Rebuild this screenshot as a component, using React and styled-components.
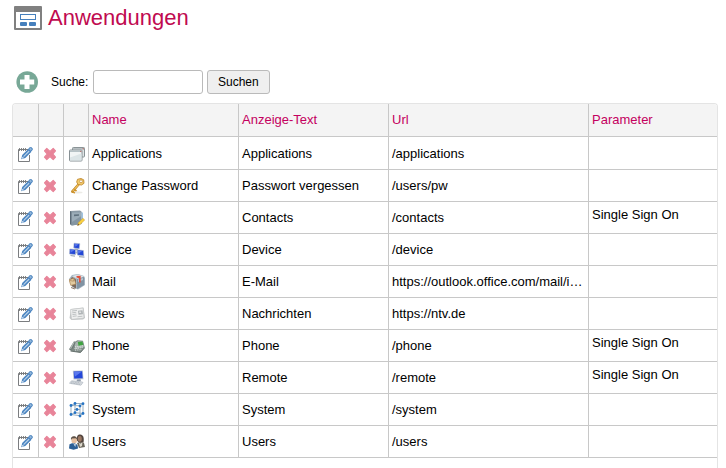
import React, { useState } from "react";
import styled, { createGlobalStyle } from "styled-components";

const GlobalStyle = createGlobalStyle`
  * {
    box-sizing: border-box;
  }

  body {
    margin: 0;
    background: #fff;
    color: #000;
    font-family: "Liberation Sans", Arial, sans-serif;
    font-size: 13px;
  }
`;

const Page = styled.main`
  display: flex;
  flex-direction: column;
  min-height: 100vh;
  padding: 4px 8px 0 12px;
`;

const TitleBar = styled.header`
  display: flex;
  align-items: center;
  gap: 6px;
  height: 28px;
  padding-left: 2px;

  h1 {
    margin: 0;
    color: #c00a50;
    font-size: 22px;
    font-weight: 400;
    line-height: 28px;
  }
`;

const SearchBar = styled.form`
  display: flex;
  align-items: center;
  gap: 4px;
  margin: 38px 0 9px;
  padding-left: 4px;
  font-size: 12px;

  label {
    width: 46px;
    padding-left: 8px;
  }
`;

const SearchInput = styled.input`
  width: 110px;
  height: 24px;
  padding: 0 4px;
  border: 1px solid #bababa;
  border-radius: 3px;
  background: #fff;
  font: inherit;
`;

const SearchButton = styled.button`
  height: 24px;
  padding: 0 10px;
  border: 1px solid #bababa;
  border-radius: 3px;
  background: #efefef;
  color: #000;
  font: inherit;
`;

const IconButton = styled.button`
  display: block;
  margin: 0 auto;
  padding: 0;
  border: 0;
  background: none;
  cursor: pointer;

  svg {
    display: block;
  }
`;

const AddButton = styled(IconButton)`
  margin: 0;
`;

const Panel = styled.section`
  flex: 1;
  overflow: hidden;
  border: 1px solid #e4e4e4;
  border-bottom: 0;
  border-radius: 4px 4px 0 0;
`;

const Grid = styled.table`
  width: 100%;
  border-collapse: separate;
  border-spacing: 0;
  table-layout: fixed;

  tbody tr:first-child td {
    height: 33px;
    padding-top: 1px;
  }
`;

const Col = styled.col`
  width: ${({ $width }) => ($width ? `${$width}px` : "auto")};
`;

const HeadCell = styled.th`
  height: 33px;
  padding: 0 3px 2px;
  border-right: 1px solid #c8c8c8;
  border-bottom: 1px solid #c8c8c8;
  background: #f4f4f4;
  color: #c4005f;
  font-weight: 400;
  text-align: left;

  &:last-child {
    border-right: 0;
  }
`;

const Cell = styled.td`
  height: 32px;
  padding: 0 3px;
  overflow: hidden;
  border-right: 1px solid #c8c8c8;
  border-bottom: 1px solid #c8c8c8;
  text-overflow: ellipsis;
  white-space: nowrap;

  &:last-child {
    padding-bottom: 6px;
    border-right: 0;
  }
`;

const IconCell = styled(Cell)`
  padding: 0 2px 0 0;

  svg {
    display: block;
    margin: 0 auto;
  }
`;

const AppIconCell = styled(IconCell)`
  padding: 0 0 0 2px;
`;

const Icon = ({ size = 16, children }) => (
  <svg width={size} height={size} viewBox="0 0 16 16" aria-hidden="true">
    {children}
  </svg>
);

const LayoutIcon = () => (
  <svg width="28" height="24" viewBox="0 0 28 24" aria-hidden="true">
    <rect width="28" height="24" rx="1" fill="#808080" />
    <rect x="2" y="6" width="24" height="16" fill="#fff" />
    <rect x="6.5" y="8.5" width="15" height="5" fill="#fff" stroke="#4680bd" />
    <rect x="6" y="16" width="7" height="4" rx="1" fill="#4680bd" />
    <rect x="15" y="16" width="7" height="4" rx="1" fill="#4680bd" />
  </svg>
);

const AddIcon = () => (
  <svg width="23" height="22" viewBox="0 0 23 22" aria-hidden="true">
    <circle cx="11.2" cy="11" r="10.8" fill="#78a897" />
    <path d="M8.5 4h5v4.5h4.7v5h-4.7V18h-5v-4.5H4v-5h4.500z" fill="#fff" />
  </svg>
);

const EditIcon = () => (
  <Icon>
    <path d="M11 3.5H1.5v12h11V9" fill="#fff" stroke="#7b7d80" />
    <path
      d="M2.5 2v3M4.500 2v3M6.500 2v3M8.500 2v3"
      stroke="#77797b"
      strokeWidth="0.9"
    />
    <path d="M4.200 13.200l1-4.200 6.300-6.300 3 3L8.300 12z" fill="#4a84c0" />
    <path d="M6.600 10.600l5.600-5.600" stroke="#b9d2ea" strokeWidth="1.100" />
    <circle cx="13.600" cy="3.200" r="1.700" fill="#8fb5da" stroke="#4680bd" />
    <path d="M5.400 10.800l1.600 1.300-2 .7z" fill="#e7eff7" />
  </Icon>
);

const DeleteIcon = () => (
  <Icon>
    <path
      d="M4.800 2.500L8 5.400l3.200-2.900 2.300 2.300L10.700 8l2.800 3.200-2.300 2.300L8 10.600l-3.200 2.900-2.300-2.300L5.300 8 2.500 4.800z"
      fill="#e88499"
      stroke="#e88499"
      strokeWidth="1.200"
      strokeLinejoin="round"
    />
  </Icon>
);

const WindowsIcon = () => (
  <Icon>
    <rect x="3.5" y="1.5" width="12" height="9.500" rx="0.8" fill="#e0e5e6" stroke="#8a9396" />
    <path d="M4 2h11v1.500H4z" fill="#b6bec1" />
    <rect x="0.500" y="4" width="12.500" height="11" rx="0.8" fill="#f1f5f5" stroke="#879094" />
    <path d="M1 4.500h11.500V6H1z" fill="#b6c2c6" />
    <path d="M1 14.500v-3l11.500-4v7z" fill="#dce5e7" />
    <path d="M11 5.300h1.500M13.500 2.800H15" stroke="#b56d66" />
  </Icon>
);

const KeyIcon = () => (
  <Icon>
    <ellipse cx="9" cy="14.500" rx="4.500" ry="0.9" fill="#ecebe7" />
    <path d="M9.500 6.500L3.300 13.600" stroke="#b98027" strokeWidth="2.600" strokeLinecap="round" />
    <path d="M9.500 6.500L3.300 13.600" stroke="#eebe58" strokeWidth="1.400" strokeLinecap="round" />
    <path d="M5.200 11.200l2.300 2M3.200 13.200l2.600 2" stroke="#cf952f" strokeWidth="1.600" />
    <path
      d="M8.500 1.300l3.500-.8 2.700 1.300.300 3.500-2.500 1.700-3.500-.5-1.300-2.500z"
      fill="#f3cb6b"
      stroke="#c18a32"
      strokeWidth="0.9"
    />
    <circle cx="12" cy="3.300" r="1.400" fill="#fff" stroke="#b77b25" strokeWidth="0.6" />
  </Icon>
);

const ContactsIcon = () => (
  <Icon>
    <path d="M1 1l10-.5 1.500 1.300V14L3 15.500 1 14z" fill="#8c9ba6" />
    <path d="M1 1l1.500.9v13.500L1 14z" fill="#5c6c78" />
    <path d="M2.500 2l10-.2V14l-10 1.500z" fill="#8496a3" />
    <path d="M3 2.500l9-.2v4L3 12z" fill="#9cadb8" />
    <path d="M5 4.500l5-.3v1.600l-5 .4z" fill="#5f717e" />
    <path d="M12.500 2.500H14v8h-1.500z" fill="#9fc3e0" />
    <path d="M8.500 15.500l1-2.900 4.400-4.300 1.800 1.700-4.600 4.500z" fill="#fad13f" stroke="#c9962f" strokeWidth="0.5" />
    <path d="M8.500 15.500l.6-1.700 1.200 1.100z" fill="#55483d" />
  </Icon>
);

const DeviceIcon = () => (
  <Icon>
    <path d="M8 7v4M5 10l6 2" stroke="#9ba5b4" />
    <path d="M5 1.200l5.800.5-.6 5L4.800 6z" fill="#2347d6" stroke="#a9b5cd" strokeWidth="0.6" />
    <path d="M5.700 2l4 .3-3.200 2.400z" fill="#5878ec" />
    <path d="M.8 7l5.700.5v5.100L.5 12z" fill="#2347d6" stroke="#a9b5cd" strokeWidth="0.6" />
    <path d="M1.400 7.700l4 .4-3.700 2.700z" fill="#5878ec" />
    <path d="M8.200 7.800l6.200.8.4 5.200-6.300-.7z" fill="#2347d6" stroke="#a9b5cd" strokeWidth="0.6" />
    <path d="M8.900 8.500l4.400.6-4 2.700z" fill="#5878ec" />
    <path d="M1.500 13.500l4.500.6M6 7.300l3 .4M10 14.700l5.500.5" stroke="#a2abb8" strokeWidth="1.200" />
  </Icon>
);

const MailIcon = () => (
  <Icon>
    <path d="M0 5l3-4 6-1 6 2 1 2v7l-7 4.500L3 13z" fill="#a5b4c0" />
    <path d="M3 2l6-1.500 6 2L9 5z" fill="#dce4e8" />
    <path d="M8 5l7-2v8l-7 4z" fill="#8193a3" />
    <path d="M9 5.500l5-1.500v2L9 8z" fill="#b6c4d1" />
    <path d="M1.500 5.500L3 3l4 2.500v9.200L3 12z" fill="#7a6a60" />
    <path d="M0 5.800l5-1.600L7 10l-5.200 1.400z" fill="#e2cba1" stroke="#a57a48" strokeWidth="0.6" />
    <path d="M.7 6.500l3.800.7.500-2.500" fill="none" stroke="#a88256" strokeWidth="0.7" />
    <path d="M10 8.500V4.200L7.500 3.500V2l4.200-.2V8.500z" fill="#e2503b" />
    <path d="M2 13.500l4 1.500" stroke="#8f7867" />
  </Icon>
);

const NewsIcon = () => (
  <Icon>
    <path d="M2 3l12.500-1.500L16 12l-2 1.500L2.500 14 .5 12z" fill="#c3c6c7" />
    <path d="M1.500 3.500L14 2l1 10-12.500 1.300z" fill="#eff0f0" stroke="#bfc2c2" strokeWidth="0.6" />
    <path d="M3 5l5-.6M3.200 6.800l4-.5M3.400 8.600l4-.5M3.700 10.400l4-.5M8.500 10.800l5-.6" stroke="#b9bdbe" strokeWidth="0.9" />
    <path d="M9 4.800l4.500-.5.5 4-4.500.5z" fill="#b0b5b7" />
    <path d="M10 5.600l2-.2.2 1.500-2 .2z" fill="#e0e2e3" />
  </Icon>
);

const PhoneIcon = () => (
  <Icon>
    <path d="M4.500 4.500l4-2.300 5.500.5 1.800 6.800-4.300 5-10-1.500z" fill="#7f8b87" />
    <path d="M5.500 5l3.500-1.800 4.500.3L15 9l-9 2.500z" fill="#aab5b1" />
    <path d="M8.800 4l4.600-.4 1 3.200-4.800 1.100z" fill="#3fa341" />
    <path d="M6 8.800l8-1M5.500 10.600l8.500-1.100M6 12.200l6.500-.6" stroke="#e8ecea" strokeWidth="0.9" strokeDasharray="1 0.8" />
    <path d="M5 3.200c1.500.4 1.600 1.500 1.200 2.500L3.300 11c-.8 1.400-2.700 1.500-3.300.3z" fill="#6c7975" />
    <path d="M5 4.300L1.500 10.700" stroke="#b3bdb9" strokeWidth="1.100" />
    <path d="M1.500 13l10 1.500 4.200-4.800" fill="none" stroke="#5c6864" strokeWidth="0.9" />
  </Icon>
);

const RemoteIcon = () => (
  <Icon>
    <path d="M3.800.8l10-.3.7 8.800-10 .2z" fill="#b9c2d0" />
    <path d="M4.700 1.500l8.400-.2.600 7-8.500.3z" fill="#2447d8" />
    <path d="M5 2l7.600-.2-6.800 5z" fill="#5a78ee" />
    <path d="M8 9.500l3.500-.2.500 2-4.500.1z" fill="#8f99a7" />
    <path d="M2.500 10.800l9 .8 2.500.8-2 2.800-11.500-1.900z" fill="#dce0e4" stroke="#a5aeb8" strokeWidth="0.6" />
    <path d="M2.700 11.800l8.800 1.200M2 12.900l8.800 1.300" stroke="#98a2ad" strokeWidth="0.7" strokeDasharray="1 0.6" />
  </Icon>
);

const SystemIcon = () => (
  <Icon>
    <path
      d="M2 3.500L6 1.500h8L11 3.800zM2 3.500v9l9 1.200v-10M6 1.500v9.200l8 .8V1.500M2 12.500l4-1.800M11 13.700l3-2.200M5 7.500h6"
      fill="none"
      stroke="#8fa6b8"
      strokeWidth="0.9"
    />
    {[[2, 3.5], [6, 1.5], [14, 1.7], [11, 4], [2, 12.5], [6, 10.7], [14, 11.5], [11, 14], [8, 7.5]].map(
      ([x, y]) => (
        <circle key={`${x}-${y}`} cx={x} cy={y} r="1.400" fill="#2573c4" />
      )
    )}
  </Icon>
);

const UsersIcon = () => (
  <Icon>
    <path d="M8 6.500c-.6-4 .6-6 3.300-5.900C14.400.8 15.300 4 14.500 8.500l-3 2z" fill="#54463f" />
    <ellipse cx="10.800" cy="4.800" rx="2" ry="2.900" fill="#9c7863" />
    <path d="M8 9l3-1 4 1 1 4-6 1z" fill="#6b675c" />
    <path d="M9.800 8.500l1.500 1.200L13.500 8l-.5 4-2 1z" fill="#ddd8cc" />
    <ellipse cx="5.200" cy="6" rx="2.800" ry="3.500" fill="#e6bf9f" />
    <path d="M2 6C1.500 3 3 2 5.500 2.200 7.500 2.400 8.200 4 7.900 5.500L6.600 4.200 3 4.500z" fill="#5b5148" />
    <path d="M0 14.500l.5-4.200L3 9.200l3.300.3L8.500 11l.5 3.500-4.500 1.300z" fill="#2b5f96" />
    <path d="M4.200 9.200l1.400 1.400 1.200-1.300-.5 3.700z" fill="#edf3f6" />
  </Icon>
);

const applications = [
  { name: "Applications", text: "Applications", url: "/applications", AppIcon: WindowsIcon },
  { name: "Change Password", text: "Passwort vergessen", url: "/users/pw", AppIcon: KeyIcon },
  { name: "Contacts", text: "Contacts", url: "/contacts", parameter: "Single Sign On", AppIcon: ContactsIcon },
  { name: "Device", text: "Device", url: "/device", AppIcon: DeviceIcon },
  { name: "Mail", text: "E-Mail", url: "https://outlook.office.com/mail/inbox", AppIcon: MailIcon },
  { name: "News", text: "Nachrichten", url: "https://ntv.de", AppIcon: NewsIcon },
  { name: "Phone", text: "Phone", url: "/phone", parameter: "Single Sign On", AppIcon: PhoneIcon },
  { name: "Remote", text: "Remote", url: "/remote", parameter: "Single Sign On", AppIcon: RemoteIcon },
  { name: "System", text: "System", url: "/system", AppIcon: SystemIcon },
  { name: "Users", text: "Users", url: "/users", AppIcon: UsersIcon },
];

const App = () => {
  const [query, setQuery] = useState("");

  return (
    <>
      <GlobalStyle />
      <Page>
        <TitleBar>
          <LayoutIcon />
          <h1>Anwendungen</h1>
        </TitleBar>

        <SearchBar onSubmit={(e) => e.preventDefault()}>
          <AddButton type="button" aria-label="Hinzufügen">
            <AddIcon />
          </AddButton>
          <label htmlFor="search">Suche:</label>
          <SearchInput
            id="search"
            type="text"
            value={query}
            onChange={(e) => setQuery(e.target.value)}
          />
          <SearchButton type="submit">Suchen</SearchButton>
        </SearchBar>

        <Panel>
          <Grid>
            <colgroup>
              <Col $width={26} />
              <Col $width={25} />
              <Col $width={25} />
              <Col $width={150} />
              <Col $width={150} />
              <Col $width={200} />
              <Col />
            </colgroup>
            <thead>
              <tr>
                <HeadCell />
                <HeadCell />
                <HeadCell />
                <HeadCell scope="col">Name</HeadCell>
                <HeadCell scope="col">Anzeige-Text</HeadCell>
                <HeadCell scope="col">Url</HeadCell>
                <HeadCell scope="col">Parameter</HeadCell>
              </tr>
            </thead>
            <tbody>
              {applications.map(({ name, text, url, parameter, AppIcon }) => (
                <tr key={name}>
                  <IconCell>
                    <IconButton type="button" aria-label={`${name} bearbeiten`}>
                      <EditIcon />
                    </IconButton>
                  </IconCell>
                  <IconCell>
                    <IconButton type="button" aria-label={`${name} löschen`}>
                      <DeleteIcon />
                    </IconButton>
                  </IconCell>
                  <AppIconCell>
                    <AppIcon />
                  </AppIconCell>
                  <Cell>{name}</Cell>
                  <Cell>{text}</Cell>
                  <Cell>{url}</Cell>
                  <Cell>{parameter}</Cell>
                </tr>
              ))}
            </tbody>
          </Grid>
        </Panel>
      </Page>
    </>
  );
};

export default App;
